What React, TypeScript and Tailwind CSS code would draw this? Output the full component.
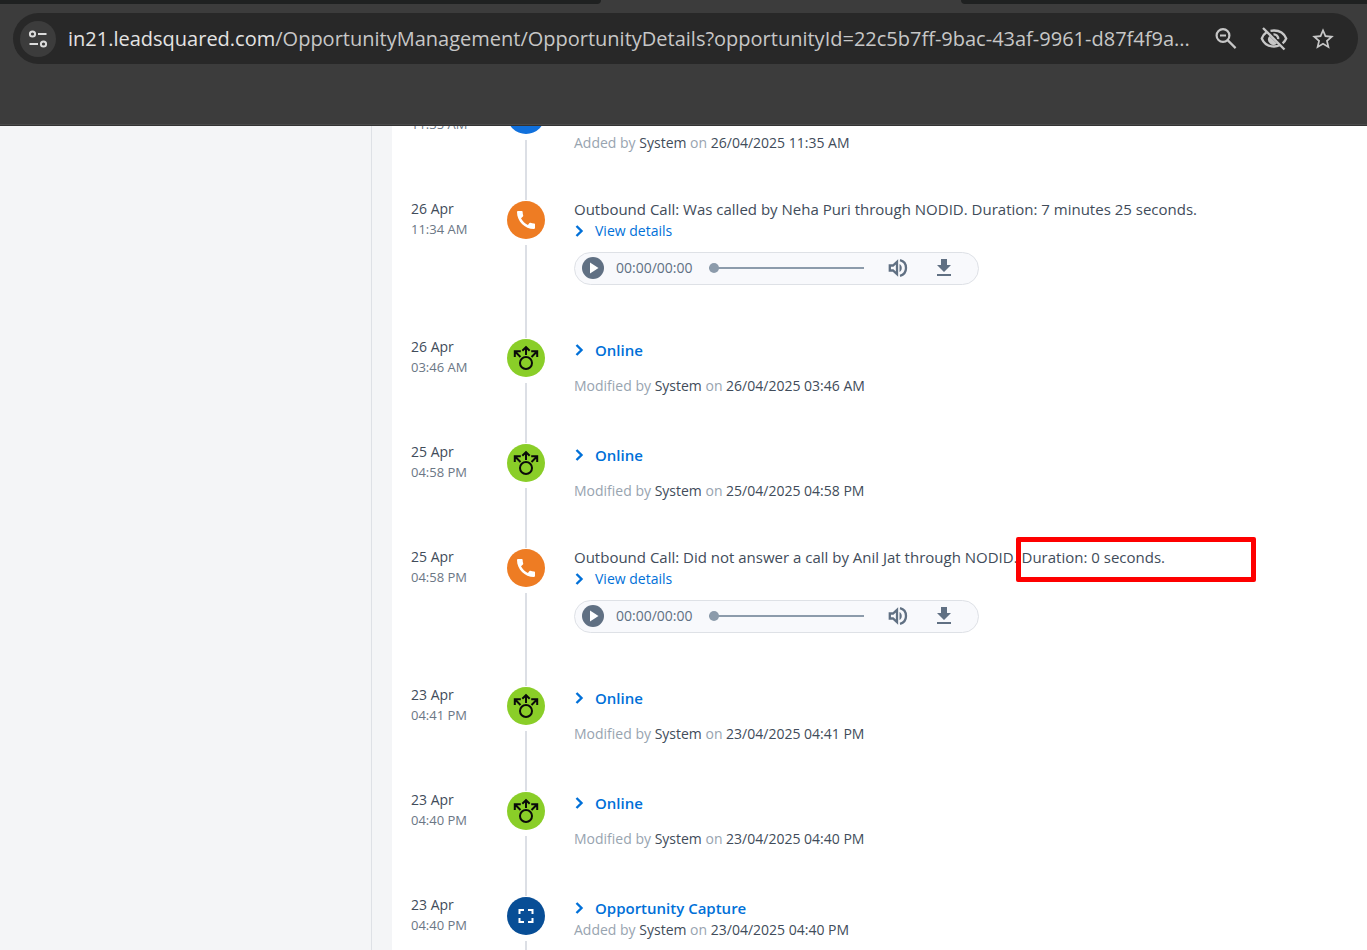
import clsx from 'clsx';
import { MdCall, MdFileDownload, MdStarOutline } from 'react-icons/md';

type Kind = 'call' | 'online' | 'capture' | 'task';

interface Activity {
  kind: Kind;
  date?: string;
  time: string;
  title?: string;
  duration?: string;
  flagged?: boolean;
  verb?: string;
  stamp?: string;
}

const ACTIVITIES: Activity[] = [
  { kind: 'task', time: '11:35 AM', verb: 'Added by', stamp: '26/04/2025 11:35 AM' },
  {
    kind: 'call',
    date: '26 Apr',
    time: '11:34 AM',
    title: 'Outbound Call: Was called by Neha Puri through NODID.',
    duration: 'Duration: 7 minutes 25 seconds.',
  },
  { kind: 'online', date: '26 Apr', time: '03:46 AM', title: 'Online', verb: 'Modified by', stamp: '26/04/2025 03:46 AM' },
  { kind: 'online', date: '25 Apr', time: '04:58 PM', title: 'Online', verb: 'Modified by', stamp: '25/04/2025 04:58 PM' },
  {
    kind: 'call',
    date: '25 Apr',
    time: '04:58 PM',
    title: 'Outbound Call: Did not answer a call by Anil Jat through NODID.',
    duration: 'Duration: 0 seconds.',
    flagged: true,
  },
  { kind: 'online', date: '23 Apr', time: '04:41 PM', title: 'Online', verb: 'Modified by', stamp: '23/04/2025 04:41 PM' },
  { kind: 'online', date: '23 Apr', time: '04:40 PM', title: 'Online', verb: 'Modified by', stamp: '23/04/2025 04:40 PM' },
  { kind: 'capture', date: '23 Apr', time: '04:40 PM', title: 'Opportunity Capture', verb: 'Added by', stamp: '23/04/2025 04:40 PM' },
];

const BADGE: Record<Kind, string> = {
  call: 'bg-[#ee7c23]',
  online: 'bg-[#8ace28]',
  capture: 'bg-[#084e96]',
  task: 'bg-[#1070dc]',
};

function TuneIcon() {
  return (
    <svg viewBox="0 0 20 20" className="size-5" fill="none" stroke="#dcdcdc" strokeWidth="2">
      <circle cx="4.5" cy="5" r="2.6" />
      <path d="M10 5h8.500M1.500 15H10" />
      <circle cx="15.5" cy="15" r="2.6" />
    </svg>
  );
}

function ZoomOutIcon() {
  return (
    <svg viewBox="0 0 24 24" className="size-6" fill="none" stroke="#c7c7c7" strokeWidth="2.2">
      <circle cx="9" cy="8.5" r="6.4" />
      <path d="M13.600 13.100l8 8M6 8.500h6" />
    </svg>
  );
}

function HiddenEyeIcon() {
  return (
    <svg viewBox="0 0 28 24" className="h-6 w-7" fill="none" stroke="#c7c7c7" strokeWidth="2.3">
      <path d="M6.500 5.200C4.300 6.600 2.700 8.900 1.800 11.500c2 5 6.700 8 12.200 8 2 0 3.900-.4 5.600-1.200" />
      <path d="M10.500 3.800C11.600 3.600 12.800 3.500 14 3.500c5.500 0 10.200 3.100 12.200 8-.8 1.900-2 3.500-3.600 4.800" />
      <path d="M9.300 9a5.400 5.400 0 0 0 7.700 7.500z" fill="#c7c7c7" stroke="none" />
      <path d="M13.500 7.400a4.300 4.300 0 0 1 4.700 4.700" />
      <path d="M3 1l21.500 21.500" />
    </svg>
  );
}

function SplitIcon() {
  return (
    <svg viewBox="0 0 26 26" className="size-[26px]" fill="none" stroke="#0a0a0a" strokeWidth="2">
      <circle cx="13" cy="18" r="6" />
      <path d="M13 10V2.500M9.300 5.800L13 2.200l3.700 3.600" />
      <path d="M7.500 12L2 6.500M1.800 12V6.200h6" />
      <path d="M18.500 12L24 6.500M24.200 12V6.200h-6" />
    </svg>
  );
}

function CaptureIcon() {
  return (
    <svg viewBox="0 0 16 16" className="size-4" fill="none" stroke="#fff" strokeWidth="2">
      <path d="M1.500 6V2H6M10 2h4.500v4M14.500 10v4H10M6 14H1.500v-4" />
    </svg>
  );
}

function SpeakerIcon() {
  return (
    <svg viewBox="0 0 20 20" className="size-5" fill="none" stroke="#607083" strokeWidth="2.3">
      <path d="M1.800 7.500H5L9 3.800v12.400L5 12.500H1.800z" />
      <path d="M11.500 6c3 1.500 3 6.500 0 8z" fill="#607083" stroke="none" />
      <path d="M12 2.200c8 2 8 13.600 0 15.600" />
    </svg>
  );
}

function Chevron() {
  return (
    <svg viewBox="0 0 10 12" className="h-3 w-2.5 shrink-0" fill="none" stroke="#0070d8" strokeWidth="2.4">
      <path d="M2.500 1l5 5-5 5" />
    </svg>
  );
}

function BadgeIcon({ kind }: { kind: Kind }) {
  if (kind === 'call') return <MdCall className="size-6 text-white" />;
  if (kind === 'online') return <SplitIcon />;
  if (kind === 'capture') return <CaptureIcon />;
  return null;
}

function Player() {
  return (
    <div className="mt-[11px] flex h-[33px] w-[405px] items-center rounded-full border border-[#dee1e6] bg-[#f8f9fc] pb-0.5 pl-[7px] text-[#607083]">
      <button type="button" aria-label="Play" className="flex size-[22px] items-center justify-center rounded-full bg-[#607083]">
        <svg viewBox="0 0 10 12" className="ml-0.5 h-3 w-2.5" fill="#fff">
          <path d="M1 .5v11L9.500 6z" />
        </svg>
      </button>
      <span className="ml-3 w-[93px] text-sm">00:00/00:00</span>
      <input
        type="range"
        aria-label="Seek"
        min={0}
        max={100}
        defaultValue={0}
        className="h-2.5 w-[155px] appearance-none bg-transparent [&::-webkit-slider-runnable-track]:h-0.5 [&::-webkit-slider-runnable-track]:bg-[#8c9bab] [&::-webkit-slider-thumb]:-mt-1 [&::-webkit-slider-thumb]:size-2.5 [&::-webkit-slider-thumb]:appearance-none [&::-webkit-slider-thumb]:rounded-full [&::-webkit-slider-thumb]:bg-[#8c9bab]"
      />
      <button type="button" aria-label="Volume" className="ml-6">
        <SpeakerIcon />
      </button>
      <button type="button" aria-label="Download" className="ml-6">
        <MdFileDownload className="size-6" />
      </button>
    </div>
  );
}

function CallBody({ item }: { item: Activity }) {
  return (
    <div>
      <p className="text-[15px] leading-5 whitespace-nowrap text-[#414c5a]">
        {item.title}{' '}
        <span className="relative">
          {item.duration}
          {item.flagged && <span className="absolute -top-2.5 -left-1.5 h-[45px] w-60 rounded-xs border-5 border-[#fe0000]" />}
        </span>
      </p>
      <a href="#details" className="mt-0.5 flex items-center gap-[11px] text-sm leading-5 text-[#0070d8]">
        <Chevron />
        View details
      </a>
      <Player />
    </div>
  );
}

function ChangeBody({ item }: { item: Activity }) {
  return (
    <div className={clsx('flex flex-col pt-[3px]', item.kind === 'capture' ? 'gap-0.5' : 'gap-4')}>
      <a href="#activity" className="flex h-5 items-center gap-[11px] text-[15px] leading-5 font-semibold text-[#0070d8]">
        <Chevron />
        {item.title}
      </a>
      <p className="text-sm leading-5 text-[#98a4b0]">
        {item.verb} <span className="text-[#414c5a]">System</span> on <span className="text-[#414c5a]">{item.stamp}</span>
      </p>
    </div>
  );
}

function ActivityRow({ item }: { item: Activity }) {
  return (
    <li className={clsx('flex', item.kind === 'call' ? 'h-[138px]' : 'h-[105px]')}>
      <div className="w-24 shrink-0 leading-5">
        <p className="h-5 text-sm leading-5 text-[#414c5a]">{item.date}</p>
        <p className="text-[13px] leading-5 text-[#6b7785]">{item.time}</p>
      </div>
      <div className="mr-[29px] -mb-px flex w-[38px] shrink-0 flex-col items-center pt-0.5">
        <span className={clsx('flex size-[38px] items-center justify-center rounded-full', BADGE[item.kind])}>
          <BadgeIcon kind={item.kind} />
        </span>
        <span className="mt-1.5 w-0.5 flex-1 bg-[#dcdfe5]" />
      </div>
      {item.kind === 'call' ? <CallBody item={item} /> : <ChangeBody item={item} />}
    </li>
  );
}

function BrowserBar() {
  return (
    <header className="relative z-10 h-[126px] shrink-0 border-b border-[#333] bg-[#3c3c3c] shadow-[inset_0_-1px_0_#4a4a4a]">
      {/* tab strip with the active tab cut out of it */}
      <div className="flex h-1">
        <div className="w-[44%] rounded-br-lg bg-[#1f2121]" />
        <div className="w-[360px]" />
        <div className="flex-1 rounded-bl-lg bg-[#1f2121]" />
      </div>
      <div className="mt-[9px] mr-[9px] ml-[13px] flex h-[51px] items-center rounded-full bg-[#282828] pr-[22px] pl-[7px]">
        <button type="button" aria-label="Site information" className="flex size-9 shrink-0 items-center justify-center rounded-full bg-[#3c3c3c]">
          <TuneIcon />
        </button>
        <p className="ml-3 flex-1 text-[20px] whitespace-nowrap text-[#c7c7c7]">
          <span className="text-[#e3e3e3]">in21.leadsquared.com</span>
          /OpportunityManagement/OpportunityDetails?opportunityId=22c5b7ff-9bac-43af-9961-d87f4f9a...
        </p>
        <div className="flex items-center gap-[22px]">
          <button type="button" aria-label="Zoom">
            <ZoomOutIcon />
          </button>
          <button type="button" aria-label="Third-party cookies blocked">
            <HiddenEyeIcon />
          </button>
          <button type="button" aria-label="Bookmark">
            <MdStarOutline className="size-[26px] text-[#c7c7c7]" />
          </button>
        </div>
      </div>
    </header>
  );
}

export default function App() {
  return (
    <div className="flex h-screen flex-col overflow-hidden bg-white font-['Open_Sans','Noto_Sans',sans-serif]">
      <BrowserBar />
      <div className="flex min-h-0 flex-1">
        <aside className="w-[372px] shrink-0 border-r border-[#dee1e6] bg-[#f4f5f7]" />
        <div className="w-5 shrink-0 bg-[#f4f5f7]" />
        <main className="min-w-0 flex-1 overflow-hidden pl-[19px]">
          {/* feed is scrolled part way, so the first entry sits under the bar */}
          <ul className="-mt-8">
            {ACTIVITIES.map((item, i) => (
              <ActivityRow key={i} item={item} />
            ))}
          </ul>
        </main>
      </div>
    </div>
  );
}
